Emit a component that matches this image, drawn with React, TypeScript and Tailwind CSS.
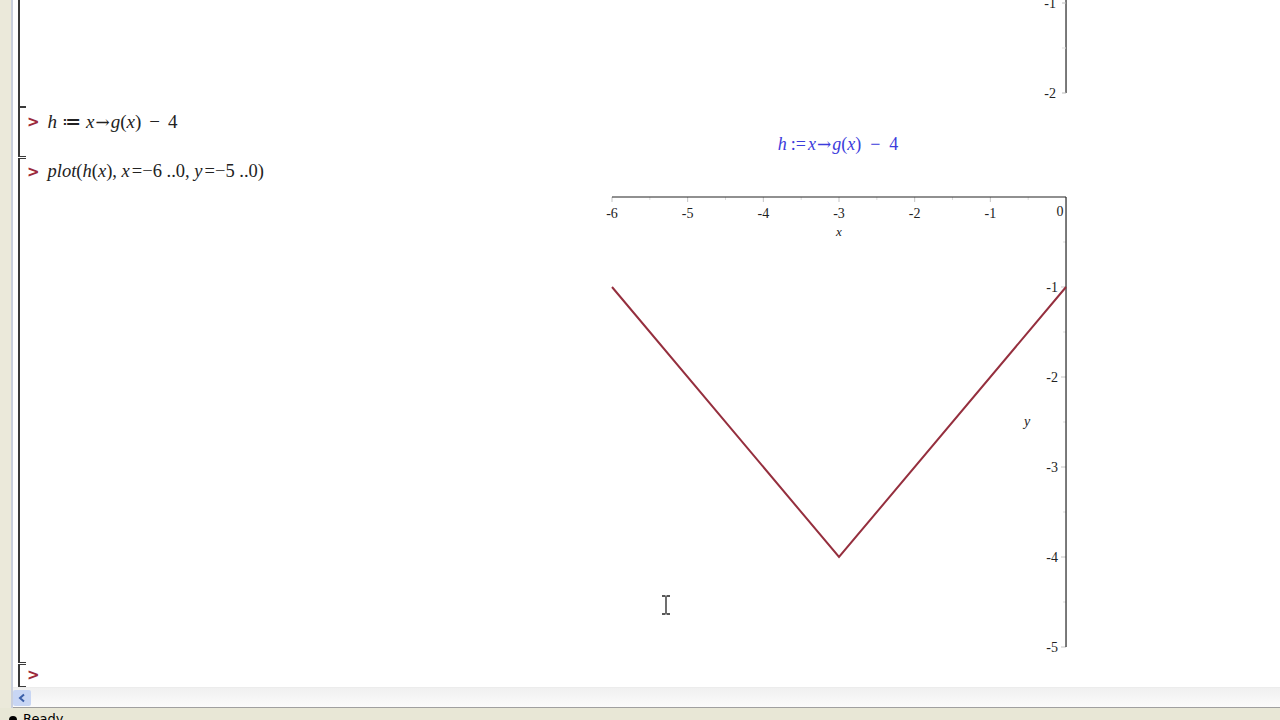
import React from "react";

const serif = { fontFamily: '"Liberation Serif", "Times New Roman", serif' };
const arrowFont = { fontFamily: '"DejaVu Serif", serif' };

// page x of plot svg left edge = 588; svg width 500
const X0 = 24; // x = -6
const XU = 75.67;
const px = (x: number) => X0 + (x + 6) * XU;

function Prompt() {
  return (
    <span className="mr-[8px] text-[15px] font-bold text-[#9c2a3a]" style={{ fontFamily: '"DejaVu Sans", sans-serif' }}>
      &gt;
    </span>
  );
}

function Bracket({ top = true, bottom = true }: { top?: boolean; bottom?: boolean }) {
  return (
    <div
      className={`w-[8px] shrink-0 self-stretch border-l-2 border-[#3a3a3a] ${top ? "border-t" : ""} ${bottom ? "border-b" : ""}`}
    />
  );
}

function I({ children }: { children: React.ReactNode }) {
  return <span className="italic">{children}</span>;
}

function Arrow() {
  return (
    <span className="mx-[1px] text-[17px]" style={arrowFont}>
      →
    </span>
  );
}

function PrevPlotTail() {
  const ax = px(0);
  return (
    <svg width={500} height={106} className="block">
      <line x1={ax} y1={0} x2={ax} y2={93} stroke="#222" strokeWidth={1.2} />
      <line x1={ax - 4} y1={3} x2={ax} y2={3} stroke="#bbb" />
      <line x1={ax - 4} y1={48} x2={ax} y2={48} stroke="#ddd" />
      <line x1={ax - 4} y1={93} x2={ax} y2={93} stroke="#bbb" />
      <text x={ax - 10} y={8} textAnchor="end" fontSize={14} fill="#222" style={serif}>-1</text>
      <text x={ax - 10} y={98} textAnchor="end" fontSize={14} fill="#222" style={serif}>-2</text>
    </svg>
  );
}

function Plot() {
  const Y0 = 11; // y = 0
  const YU = 90;
  const py = (y: number) => Y0 - y * YU;
  const ax = px(0);
  const xs = [-6, -5, -4, -3, -2, -1];
  const halves = [-5.5, -4.5, -3.5, -2.5, -1.5, -0.5];
  const ys = [-1, -2, -3, -4, -5];
  const yHalves = [-0.5, -1.5, -2.5, -3.5, -4.5];
  return (
    <svg width={500} height={476} className="block">
      {/* minor ticks */}
      {halves.map((x) => (
        <line key={x} x1={px(x)} y1={Y0} x2={px(x)} y2={Y0 + 3} stroke="#dcdcdc" />
      ))}
      {xs.map((x) => (
        <line key={x} x1={px(x)} y1={Y0} x2={px(x)} y2={Y0 + 5} stroke="#c4c4c4" />
      ))}
      {yHalves.map((y) => (
        <line key={y} x1={ax - 3} y1={py(y)} x2={ax} y2={py(y)} stroke="#dcdcdc" />
      ))}
      {ys.map((y) => (
        <line key={y} x1={ax - 5} y1={py(y)} x2={ax} y2={py(y)} stroke="#c4c4c4" />
      ))}
      {/* axes */}
      <line x1={px(-6)} y1={Y0} x2={ax} y2={Y0} stroke="#222" strokeWidth={1.2} />
      <line x1={ax} y1={Y0} x2={ax} y2={py(-5)} stroke="#222" strokeWidth={1.2} />
      {/* labels */}
      {xs.map((x) => (
        <text key={x} x={px(x)} y={Y0 + 21} textAnchor="middle" fontSize={14} fill="#222" style={serif}>
          {x}
        </text>
      ))}
      <text x={ax - 6} y={Y0 + 19} textAnchor="middle" fontSize={14} fill="#222" style={serif}>0</text>
      {ys.map((y) => (
        <text key={y} x={ax - 8} y={py(y) + 5} textAnchor="end" fontSize={14} fill="#222" style={serif}>
          {y}
        </text>
      ))}
      <text x={px(-3)} y={Y0 + 39} textAnchor="middle" fontSize={13} fontStyle="italic" fill="#222" style={serif}>x</text>
      <text x={439} y={py(-2.5) + 4} textAnchor="middle" fontSize={14} fontStyle="italic" fill="#222" style={serif}>y</text>
      {/* curve h(x) = |x+3| - 4 */}
      <polyline
        points={`${px(-6)},${py(-1)} ${px(-3)},${py(-4)} ${px(0)},${py(-1)}`}
        fill="none"
        stroke="#952f3e"
        strokeWidth={2}
      />
    </svg>
  );
}

export default function App() {
  return (
    <div className="relative flex h-[720px] w-[1280px] flex-col overflow-hidden bg-white" style={serif}>
      <div className="flex h-[708px] shrink-0">
        <div className="w-[13px] shrink-0 border-r-2 border-[#c9cfdc] bg-[#ebe9da]" />
        <div className="flex min-w-0 flex-1 flex-col">
          <div className="h-[687px] overflow-hidden">
            <div className="flex w-[1650px] flex-col pl-[5px]">
              {/* group 1: tail of previous plot */}
              <div className="flex h-[107px]">
                <Bracket top={false} />
                <div className="flex w-[1624px] justify-center">
                  <PrevPlotTail />
                </div>
              </div>
              {/* group 2 */}
              <div className="flex h-[50px]">
                <Bracket />
                <div className="flex w-[1624px] flex-col">
                  <div className="flex h-[30px] items-center pl-[1px] text-[19px] text-[#222]">
                    <Prompt />
                    <span>
                      <I>h</I>
                      <span className="mx-[5px]">≔</span>
                      <I>x</I>
                      <Arrow />
                      <I>g</I>(<I>x</I>)<span className="mx-[8px]">−</span>4
                    </span>
                  </div>
                  <div className="flex h-[14px] items-center justify-center text-[18px] text-[#3c3cdc]">
                    <span>
                      <I>h</I>
                      <span className="ml-[4px] mr-[2px]">:=</span>
                      <I>x</I>
                      <Arrow />
                      <I>g</I>(<I>x</I>)<span className="mx-[9px]">−</span>4
                    </span>
                  </div>
                </div>
              </div>
              {/* group 3 */}
              <div className="mt-[1px] flex h-[505px]">
                <Bracket />
                <div className="flex w-[1624px] flex-col">
                  <div className="flex h-[28px] items-center pl-[1px] text-[18.5px] text-[#222]">
                    <Prompt />
                    <span>
                      <I>plot</I>(<I>h</I>(<I>x</I>), <I>x</I>
                      <span className="ml-[2px]">=−6 ..0,</span> <I>y</I>
                      <span className="ml-[2px]">=−5 ..0)</span>
                    </span>
                  </div>
                  <div className="flex justify-center">
                    <Plot />
                  </div>
                </div>
              </div>
              {/* group 4 */}
              <div className="mt-[1px] flex h-[23px]">
                <Bracket />
                <div className="flex items-center pl-[1px]">
                  <Prompt />
                </div>
              </div>
            </div>
          </div>
          {/* horizontal scrollbar */}
          <div className="flex h-[20px] shrink-0 items-center border-t border-[#ececec] bg-gradient-to-b from-[#f0f0f0] to-[#fbfbfb]">
            <div className="flex h-[16px] w-[18px] items-center justify-center rounded-[2px] bg-[#c8d6f4]">
              <svg width={8} height={10} viewBox="0 0 8 10">
                <path d="M6 1.5L2 5l4 3.5" stroke="#3b5fa8" strokeWidth={2} fill="none" />
              </svg>
            </div>
          </div>
          <div className="h-px bg-[#a0a0a0]" />
        </div>
      </div>
      {/* status bar */}
      <div className="flex flex-1 items-start gap-[6px] bg-[#e8e7d6] pl-[9px] pt-[3px] text-[13px] leading-[16px] text-black" style={{ fontFamily: '"DejaVu Sans", sans-serif' }}>
        <span className="mt-[5px] h-[8px] w-[8px] rounded-full bg-black" />
        <span>Ready</span>
      </div>
      {/* mouse text cursor */}
      <svg className="absolute left-[661px] top-[595px]" width={10} height={20}>
        <path d="M1 1h3.5M5.5 1H9M5 1.5v17M1 19h3.5M5.5 19H9" stroke="#222" strokeWidth={1.3} fill="none" />
      </svg>
    </div>
  );
}
